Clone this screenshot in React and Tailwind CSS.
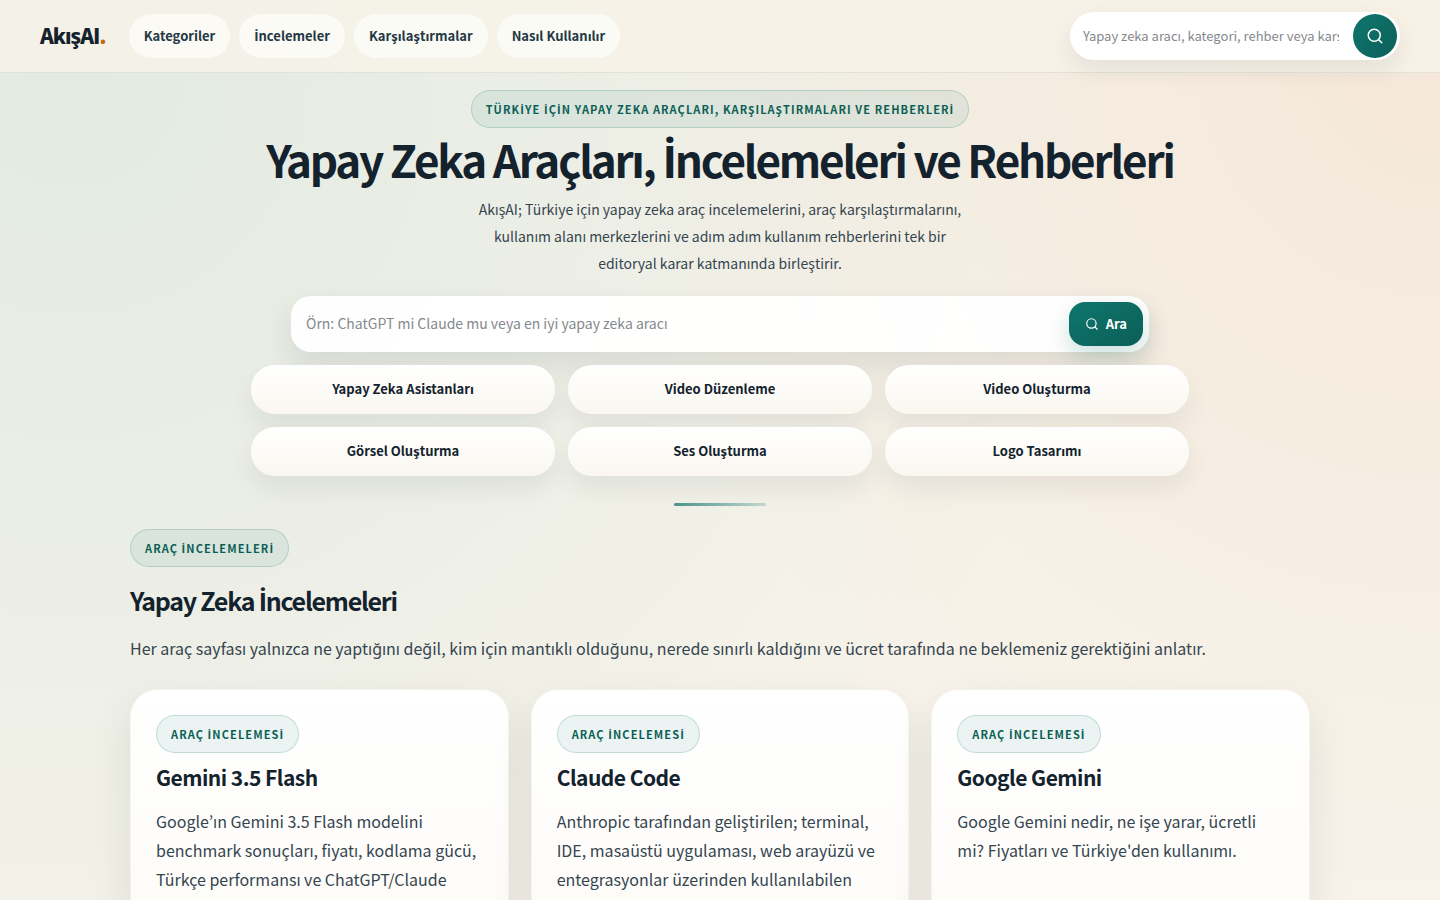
import { Search } from 'lucide-react';

const navItems = ['Kategoriler', 'İncelemeler', 'Karşılaştırmalar', 'Nasıl Kullanılır'];

const categories = [
  'Yapay Zeka Asistanları',
  'Video Düzenleme',
  'Video Oluşturma',
  'Görsel Oluşturma',
  'Ses Oluşturma',
  'Logo Tasarımı',
];

const reviews = [
  {
    title: 'Gemini 3.5 Flash',
    text: 'Google’ın Gemini 3.5 Flash modelini benchmark sonuçları, fiyatı, kodlama gücü, Türkçe performansı ve ChatGPT/Claude',
  },
  {
    title: 'Claude Code',
    text: 'Anthropic tarafından geliştirilen; terminal, IDE, masaüstü uygulaması, web arayüzü ve entegrasyonlar üzerinden kullanılabilen',
  },
  {
    title: 'Google Gemini',
    text: "Google Gemini nedir, ne işe yarar, ücretli mi? Fiyatları ve Türkiye'den kullanımı.",
  },
];

const Turkish = ({ text }) => (
  <span>
    {text.split(/(İ)/).map((part, i) =>
      part === 'İ' ? (
        <span key={i} className="font-['Open_Sans',sans-serif] leading-none">
          {part}
        </span>
      ) : (
        part
      )
    )}
  </span>
);

const Badge = ({ text }) => (
  <span className="inline-flex h-[38px] items-center rounded-full border border-[#0f766e]/20 bg-[#0f766e]/8 px-[14px] text-[11px] font-bold tracking-widest text-[#0b5f54]">
    <Turkish text={text} />
  </span>
);

const Header = () => (
  <header className="flex h-[73px] items-center justify-between border-b border-[#102028]/8 bg-[#f8f2e8]/80 px-10">
    <div className="flex items-center gap-[23px]">
      <a href="#" className="text-[21px] font-extrabold tracking-tighter text-[#13222d]">
        AkışAI<span className="text-[#c56a12]">.</span>
      </a>
      <nav className="flex gap-[9px]">
        {navItems.map((item) => (
          <a
            key={item}
            href="#"
            className="flex h-11 items-center rounded-full bg-[#fdfcf8]/80 px-[15px] text-[13px] font-bold text-[#243744]"
          >
            <Turkish text={item} />
          </a>
        ))}
      </nav>
    </div>
    <form className="flex h-12 w-[330px] items-center rounded-full bg-white pr-[3px] pl-[13px] shadow-[0_10px_24px_rgba(16,32,40,0.08)]">
      <input
        type="text"
        aria-label="Sitede ara"
        placeholder="Yapay zeka aracı, kategori, rehber veya karşılaştırma ara"
        className="mr-[14px] min-w-0 flex-1 bg-transparent text-[13px] text-[#13222d] outline-none placeholder:text-[#85898d]"
      />
      <button
        type="button"
        aria-label="Ara"
        className="flex size-11 items-center justify-center rounded-full bg-linear-to-br from-[#0f766e] to-[#0b5f58] text-white"
      >
        <Search size={18} strokeWidth={2} />
      </button>
    </form>
  </header>
);

const Hero = () => (
  <section className="mx-auto flex max-w-[938px] flex-col items-center pt-[17px] text-center">
    <Badge text="TÜRKİYE İÇİN YAPAY ZEKA ARAÇLARI, KARŞILAŞTIRMALARI VE REHBERLERİ" />
    <h1 className="mt-px text-[44px] leading-[60px] font-bold tracking-tighter text-[#13222d]">
      <Turkish text="Yapay Zeka Araçları, İncelemeleri ve Rehberleri" />
    </h1>
    <p className="mt-[7px] max-w-[500px] text-[14px] leading-[27px] text-[#35454f]">
      AkışAI; Türkiye için yapay zeka araç incelemelerini, araç karşılaştırmalarını, kullanım alanı
      merkezlerini ve adım adım kullanım rehberlerini tek bir editoryal karar katmanında birleştirir.
    </p>
    <form className="mt-[19px] flex h-14 w-full max-w-[858px] items-center rounded-[20px] bg-white/95 pr-[6px] pl-[15px] shadow-[0_14px_30px_rgba(16,32,40,0.1)]">
      <input
        type="text"
        aria-label="Araç ara"
        placeholder="Örn: ChatGPT mi Claude mu veya en iyi yapay zeka aracı"
        className="min-w-0 flex-1 bg-transparent pb-0.5 text-[14px] text-[#13222d] outline-none placeholder:text-[#85898d]"
      />
      <button
        type="button"
        className="flex h-11 items-center gap-[7px] rounded-2xl bg-linear-to-br from-[#0f766e] to-[#0b5f58] px-4 text-[13px] font-bold text-white shadow-[0_10px_24px_rgba(15,118,110,0.22)]"
      >
        <Search size={14} />
        Ara
      </button>
    </form>
    <div className="mt-[13px] grid w-full grid-cols-3 gap-[13px]">
      {categories.map((category) => (
        <a
          key={category}
          href="#"
          className="flex h-[49px] items-center justify-center rounded-3xl bg-linear-to-b from-white to-[#faf7f0] pb-0.5 text-[13px] font-bold text-[#13222d] shadow-[0_12px_26px_rgba(16,32,40,0.07)]"
        >
          {category}
        </a>
      ))}
    </div>
    <div className="mt-[27px] h-[3px] w-[92px] rounded-full bg-linear-to-r from-[#0f766e]/75 to-[#0f766e]/20" />
  </section>
);

const ReviewCard = ({ title, text }) => (
  <article className="min-h-72 rounded-[28px] border border-[#102028]/4 bg-linear-to-b from-white to-[#fdfbf7] p-[25px] shadow-[0_18px_44px_rgba(16,32,40,0.09)]">
    <Badge text="ARAÇ İNCELEMESİ" />
    <h3 className="mt-[7px] text-[21px] leading-[34px] font-bold tracking-tight text-[#13222d]">{title}</h3>
    <p className="mt-[13px] text-[16px] leading-[29px] text-[#35454f]">{text}</p>
  </article>
);

export default function App() {
  return (
    <div className="min-h-screen bg-[#f7f3ea] bg-[radial-gradient(circle_at_5%_8%,rgba(16,148,148,0.09),transparent_1050px),radial-gradient(circle_at_100%_5%,rgba(228,130,70,0.10),transparent_850px)] font-['Noto_Sans_CJK_KR','Noto_Sans',sans-serif]">
      <Header />
      <main>
        <Hero />
        <section className="mx-auto max-w-[1180px] pt-[23px]">
          <Badge text="ARAÇ İNCELEMELERİ" />
          <h2 className="mt-[14px] text-[25px] leading-[38px] font-bold tracking-tighter text-[#13222d]">
            <Turkish text="Yapay Zeka İncelemeleri" />
          </h2>
          <p className="mt-[15px] text-[16px] leading-[29px] text-[#35454f]">
            Her araç sayfası yalnızca ne yaptığını değil, kim için mantıklı olduğunu, nerede sınırlı kaldığını ve
            ücret tarafında ne beklemeniz gerektiğini anlatır.
          </p>
          <div className="mt-[26px] grid grid-cols-3 gap-[22px]">
            {reviews.map((review) => (
              <ReviewCard key={review.title} {...review} />
            ))}
          </div>
        </section>
      </main>
    </div>
  );
}
